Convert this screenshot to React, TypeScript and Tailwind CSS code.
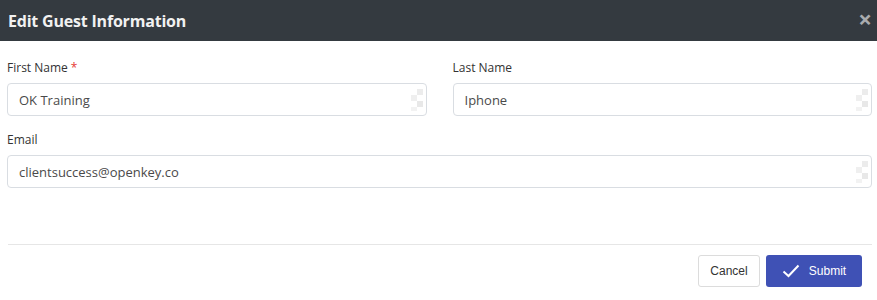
import React from 'react';

const FONT = { fontFamily: '"Open Sans", "Noto Sans", sans-serif' };

function AutofillMark() {
  // faint checker glyph that a browser extension paints inside the inputs
  return (
    <svg width="16" height="26" viewBox="0 0 16 26" className="absolute right-[2px] top-[4px]">
      <rect x="8" y="2" width="6" height="6" fill="#ececec" />
      <rect x="2" y="8" width="6" height="6" fill="#efefef" />
      <rect x="8" y="14" width="6" height="6" fill="#e8e8e8" />
      <rect x="2" y="20" width="6" height="4" fill="#f2f2f2" />
    </svg>
  );
}

function Field({ label, value, required }: { label: string; value: string; required?: boolean }) {
  return (
    <div className="flex flex-col">
      <label className="text-[12px] leading-[16px] text-[#333] mb-[7px]">
        {label}
        {required && <span className="text-[#e53935] ml-[3px]">*</span>}
      </label>
      <div className="relative">
        <input
          readOnly
          value={value}
          className="w-full h-[33px] rounded-[4px] border border-[#d9dde2] bg-white pl-[11px] pr-6 text-[13px] text-[#4a4a4a] outline-none"
          style={FONT}
        />
        <AutofillMark />
      </div>
    </div>
  );
}

export default function App() {
  return (
    <div className="w-[877px] h-[300px] bg-white overflow-hidden" style={FONT}>
      <div className="h-[41px] bg-[#343a40] flex items-center justify-between pl-[8px] pr-[5px]">
        <h2 className="text-[16px] font-bold text-[#f1f1f1] tracking-[-0.2px]">Edit Guest Information</h2>
        <span className="text-[#a9abae] text-[24px] font-bold leading-none mt-[-4px]">×</span>
      </div>

      <div className="pl-[7px] pr-[5px] pt-[19px]">
        <div className="grid grid-cols-2 gap-x-[26px]">
          <Field label="First Name" value="OK Training" required />
          <Field label="Last Name" value="Iphone" />
        </div>
        <div className="mt-[16px]">
          <Field label="Email" value="clientsuccess@openkey.co" />
        </div>
      </div>

      <div className="ml-[8px] mr-[5px] mt-[56px] border-t border-[#e6e6e6]" />

      <div className="flex justify-end gap-[6px] pr-[15px] pt-[10px]" style={{ fontFamily: '"Liberation Sans", Arial, sans-serif' }}>
        <button className="h-[32px] w-[62px] rounded-[3px] border border-[#dcdcdc] bg-white text-[12px] text-[#333]">
          Cancel
        </button>
        <button className="h-[32px] w-[96px] rounded-[3px] bg-[#3f51b5] text-[12px] text-white flex items-center justify-center gap-[9px]">
          <svg width="18" height="14" viewBox="0 0 18 14" fill="none">
            <path d="M1.5 7.5 L6.5 12 L16.5 1.5" stroke="white" strokeWidth="2" />
          </svg>
          Submit
        </button>
      </div>
    </div>
  );
}
